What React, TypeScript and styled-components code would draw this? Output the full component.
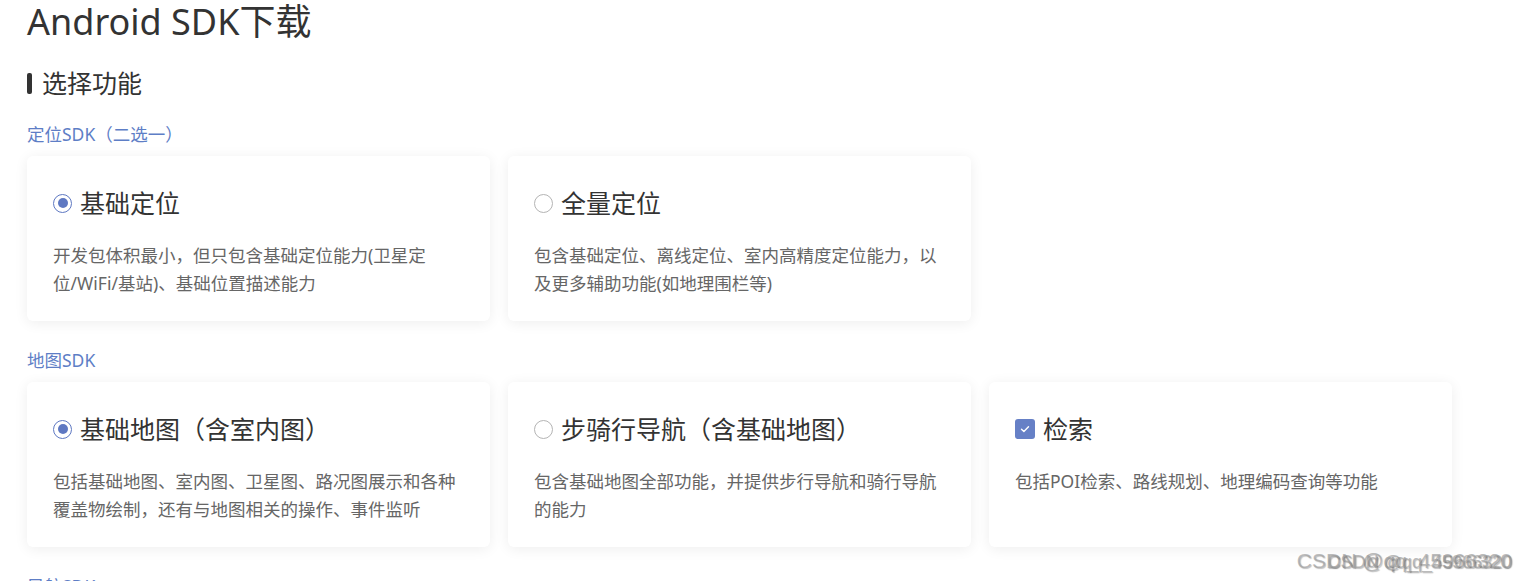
import React from 'react'
import styled, { createGlobalStyle } from 'styled-components'

const GlobalStyle = createGlobalStyle`
    html, body {
        margin: 0;
        padding: 0;
        background: #fff;
        font-family: "Noto Sans", "Noto Sans CJK SC", sans-serif;
        color: #333;
    }
`

const Page = styled.div`
    position: relative;
    padding: 0 27px;
    height: 581px;
    overflow: hidden;
`

const Title = styled.h1`
    margin: 0;
    font-size: 36px;
    font-weight: 400;
    line-height: 44px;
    color: #333;
`

const SectionHeading = styled.h2`
    display: flex;
    align-items: center;
    gap: 10px;
    margin: 22px 0 0;
    font-size: 25px;
    font-weight: 400;
    line-height: 34px;
    color: #333;
    &::before {
        content: '';
        width: 5px;
        height: 21px;
        border-radius: 2px;
        background: #333;
    }
`

const Group = styled.section`
    display: flex;
    flex-direction: column;
    padding-top: 22px;
`

const GroupLabel = styled.div`
    font-size: 17.5px;
    line-height: 24px;
    color: #5e7ec6;
`

const CardRow = styled.div`
    display: grid;
    grid-template-columns: repeat(3, 463px);
    gap: 18px;
    margin-top: 10px;
    margin-bottom: 5px;
`

const Card = styled.div`
    background: #fff;
    border-radius: 6px;
    box-shadow: 0 2px 14px rgba(0, 0, 0, 0.07);
    padding: 30px 26px 24px;
    min-height: 165px;
    box-sizing: border-box;
`

const CardHead = styled.div`
    display: flex;
    align-items: center;
    gap: 8px;
    font-size: 25px;
    line-height: 34px;
    color: #333;
`

const Radio = styled.span<{ $checked?: boolean }>`
    width: 19px;
    height: 19px;
    box-sizing: border-box;
    border-radius: 50%;
    border: 1.5px solid ${(p) => (p.$checked ? '#5e78c2' : '#b4b4b4')};
    display: flex;
    align-items: center;
    justify-content: center;
    &::after {
        content: '';
        display: ${(p) => (p.$checked ? 'block' : 'none')};
        width: 10px;
        height: 10px;
        border-radius: 50%;
        background: #5e78c2;
    }
`

const Check = styled.span`
    width: 20px;
    height: 20px;
    border-radius: 3px;
    background: #6680c6;
    display: flex;
    align-items: center;
    justify-content: center;
`

const Desc = styled.p`
    margin: 21px 0 0;
    font-size: 17.5px;
    line-height: 28px;
    color: #666;
`

const NoBreak = styled.span`
    white-space: nowrap;
`

const Watermark = styled.span<{ $size: number }>`
    position: absolute;
    bottom: 8px;
    right: 16px;
    font-family: "Liberation Sans", Arial, sans-serif;
    font-size: ${(p) => p.$size}px;
    color: rgba(160, 160, 160, 0.7);
    text-shadow: 1px 1px 1px rgba(0, 0, 0, 0.25);
`

type Option = {
    kind: 'radio' | 'check'
    checked?: boolean
    title: string
    desc: React.ReactNode
}

const groups: { label: string; options: Option[] }[] = [
    {
        label: '定位SDK（二选一）',
        options: [
            {
                kind: 'radio',
                checked: true,
                title: '基础定位',
                desc: (
                    <>
                        开发包体积最小，但只包含基础定位能力(卫星定
                        <NoBreak>位/WiFi/</NoBreak>基站)、基础位置描述能力
                    </>
                ),
            },
            {
                kind: 'radio',
                title: '全量定位',
                desc: '包含基础定位、离线定位、室内高精度定位能力，以及更多辅助功能(如地理围栏等)',
            },
        ],
    },
    {
        label: '地图SDK',
        options: [
            {
                kind: 'radio',
                checked: true,
                title: '基础地图（含室内图）',
                desc: '包括基础地图、室内图、卫星图、路况图展示和各种覆盖物绘制，还有与地图相关的操作、事件监听',
            },
            {
                kind: 'radio',
                title: '步骑行导航（含基础地图）',
                desc: '包含基础地图全部功能，并提供步行导航和骑行导航的能力',
            },
            {
                kind: 'check',
                checked: true,
                title: '检索',
                desc: '包括POI检索、路线规划、地理编码查询等功能',
            },
        ],
    },
    { label: '导航SDK', options: [] },
]

function OptionCard({ option }: { option: Option }) {
    return (
        <Card>
            <CardHead>
                {option.kind === 'radio' ? (
                    <Radio $checked={option.checked} />
                ) : (
                    <Check>
                        <svg width="12" height="12" viewBox="0 0 12 12">
                            <path d="M2.5 6.2l2.4 2.3 4.6-4.8" fill="none" stroke="#fff" strokeWidth="1.4" strokeLinecap="round" strokeLinejoin="round" />
                        </svg>
                    </Check>
                )}
                <span>{option.title}</span>
            </CardHead>
            <Desc>{option.desc}</Desc>
        </Card>
    )
}

export default function App() {
    return (
        <>
            <GlobalStyle />
            <Page>
                <Title>Android SDK下载</Title>
                <SectionHeading>选择功能</SectionHeading>
                {groups.map((g) => (
                    <Group key={g.label}>
                        <GroupLabel>{g.label}</GroupLabel>
                        {g.options.length > 0 && (
                            <CardRow>
                                {g.options.map((o) => (
                                    <OptionCard key={o.title} option={o} />
                                ))}
                            </CardRow>
                        )}
                    </Group>
                ))}
                <Watermark $size={21}>CSDN @qq_45966320</Watermark>
                <Watermark $size={18}>CSDN @qq_45966320</Watermark>
            </Page>
        </>
    )
}
